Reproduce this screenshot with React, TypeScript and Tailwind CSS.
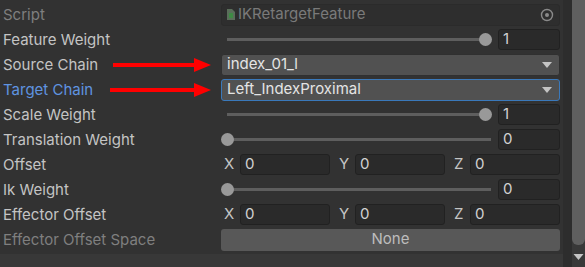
import React from 'react';

const font = { fontFamily: 'Inter, "Noto Sans", sans-serif' };

function Label({ text, tone = 'normal' }: { text: string; tone?: 'normal' | 'dim' | 'blue' }) {
  const color = tone === 'dim' ? 'text-[#7f7f7f]' : tone === 'blue' ? 'text-[#5f94e0]' : 'text-[#c4c4c4]';
  return <div className={`w-[221px] shrink-0 pl-[3px] text-[15px] leading-none ${color}`}>{text}</div>;
}

function NumberField({ value, className = '' }: { value: string; className?: string }) {
  return (
    <div className={`h-[21px] rounded-[3px] border border-[#212121] bg-[#2a2a2a] px-[4px] flex items-center text-[15px] text-[#d2d2d2] ${className}`}>
      {value}
    </div>
  );
}

function Slider({ value, pos }: { value: string; pos: 'left' | 'right' }) {
  return (
    <div className="flex flex-1 items-center gap-[7px]">
      <div className="relative flex-1 h-[21px] flex items-center">
        <div className="h-[3px] w-full bg-[#5e5e5e] ml-[6px]" />
        <div
          className={`absolute top-[4px] w-[13px] h-[13px] rounded-full bg-[#999999] ${pos === 'left' ? 'left-0' : 'right-[-1px]'}`}
        />
      </div>
      <NumberField value={value} className="w-[62px]" />
    </div>
  );
}

function Vector3() {
  return (
    <div className="flex flex-1 items-center gap-[6px]">
      {['X', 'Y', 'Z'].map((axis) => (
        <div key={axis} className="flex flex-1 items-center">
          <span className="w-[19px] pl-[3px] text-[15px] text-[#c4c4c4]">{axis}</span>
          <NumberField value="0" className="flex-1" />
        </div>
      ))}
    </div>
  );
}

function Dropdown({ value, focused }: { value: string; focused?: boolean }) {
  return (
    <div
      className={`flex flex-1 h-[22px] items-center justify-between rounded-[3px] bg-[#515151] pl-[5px] pr-[6px] text-[15px] text-[#e4e4e4] border ${
        focused ? 'border-[#3a79bb]' : 'border-[#303030]'
      }`}
    >
      <span>{value}</span>
      <svg width="12" height="8" viewBox="0 0 12 8">
        <path d="M1 1 L11 1 L6 7 Z" fill="#c4c4c4" />
      </svg>
    </div>
  );
}

function RedArrow({ from }: { from: number }) {
  const w = 212 - from;
  return (
    <svg className="absolute top-1/2 -translate-y-1/2" style={{ left: from }} width={w} height="14" viewBox={`0 0 ${w} 14`}>
      <rect x="0" y="5" width={w - 16} height="4" fill="#ff0000" />
      <path d={`M${w - 18} 0 L${w - 1} 7 L${w - 18} 14 Z`} fill="#ff0000" />
    </svg>
  );
}

function Row({ children }: { children: React.ReactNode }) {
  return <div className="relative flex h-[25px] items-center pr-[3px]">{children}</div>;
}

export default function App() {
  return (
    <div className="relative w-[585px] h-[267px] bg-[#383838] flex overflow-hidden" style={font}>
      <div className="flex flex-col w-[563px]">
        <div className="bg-[#323232] pt-[2px] pb-[2px]">
          <Row>
            <Label text="Script" tone="dim" />
            <div className="flex flex-1 h-[22px] items-center justify-between rounded-[3px] border border-[#2b2b2b] bg-[#2e2e2e] pl-[4px] pr-[5px] text-[15px] text-[#7a7a7a]">
              <span className="flex items-center gap-[2px]">
                <svg width="10" height="13" viewBox="0 0 10 13">
                  <path d="M1 1 H6 L9 4 V12 H1 Z" fill="#5a6e5a" />
                  <rect x="3" y="5" width="4" height="5" fill="#3e8a44" />
                </svg>
                IKRetargetFeature
              </span>
              <svg width="14" height="14" viewBox="0 0 14 14">
                <circle cx="7" cy="7" r="5.5" fill="none" stroke="#8a8a8a" strokeWidth="1.4" />
                <circle cx="7" cy="7" r="2" fill="#8a8a8a" />
              </svg>
            </div>
          </Row>
          <Row>
            <Label text="Feature Weight" />
            <Slider value="1" pos="right" />
          </Row>
          <Row>
            <Label text="Source Chain" />
            <RedArrow from={113} />
            <Dropdown value="index_01_l" />
          </Row>
          <Row>
            <Label text="Target Chain" tone="blue" />
            <RedArrow from={110} />
            <Dropdown value="Left_IndexProximal" focused />
          </Row>
          <Row>
            <Label text="Scale Weight" />
            <Slider value="1" pos="right" />
          </Row>
          <Row>
            <Label text="Translation Weight" />
            <Slider value="0" pos="left" />
          </Row>
          <Row>
            <Label text="Offset" />
            <Vector3 />
          </Row>
          <Row>
            <Label text="Ik Weight" />
            <Slider value="0" pos="left" />
          </Row>
          <Row>
            <Label text="Effector Offset" />
            <Vector3 />
          </Row>
          <Row>
            <Label text="Effector Offset Space" tone="dim" />
            <div className="flex flex-1 h-[22px] items-center justify-center rounded-[3px] bg-[#585858] text-[15px] text-[#bdbdbd]">
              None
            </div>
          </Row>
        </div>
      </div>
      <div className="flex w-[22px]">
        <div className="w-[9px] bg-[#2d2d2d]" />
        <div className="flex-1 flex flex-col">
          <div className="h-[245px] bg-[#5f5f5f] rounded-b-[6px]" />
        </div>
      </div>
      <svg className="absolute left-[573px] top-[253px]" width="11" height="8" viewBox="0 0 11 8">
        <path d="M0.5 1 L10.5 1 L5.5 7 Z" fill="#c4c4c4" />
      </svg>
    </div>
  );
}
